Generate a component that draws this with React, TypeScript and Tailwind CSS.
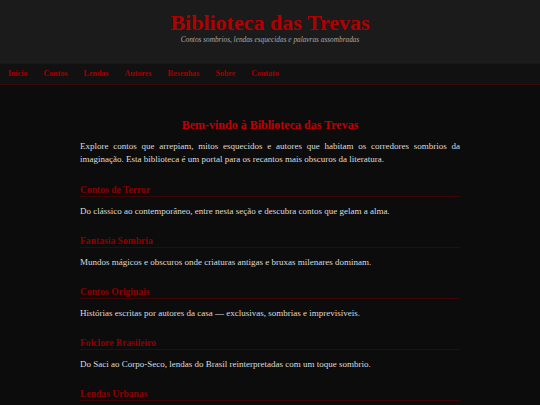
import React from 'react';

const links = ['Inicio', 'Contos', 'Lendas', 'Autores', 'Resenhas', 'Sobre', 'Contato'];

const sections = [
  { title: 'Contos de Terror', text: 'Do clássico ao contemporâneo, entre nesta seção e descubra contos que gelam a alma.' },
  { title: 'Fantasia Sombria', text: 'Mundos mágicos e obscuros onde criaturas antigas e bruxas milenares dominam.' },
  { title: 'Contos Originais', text: 'Histórias escritas por autores da casa — exclusivas, sombrias e imprevisíveis.' },
  { title: 'Folclore Brasileiro', text: 'Do Saci ao Corpo-Seco, lendas do Brasil reinterpretadas com um toque sombrio.' },
  { title: 'Lendas Urbanas', text: 'Histórias que circulam pelas cidades, sussurradas entre becos e madrugadas.' },
];

const App: React.FC = () => {
  return (
    <div className="min-h-screen bg-[#0c0c0c] text-[#dcdcdc]" style={{ fontFamily: '"Liberation Serif", serif' }}>
      <header className="bg-[#1b1b1c] border-b border-[#3a0a0a] pt-[11px] pb-[18px] text-center">
        <h1 className="text-[22px] leading-[24px] font-bold text-[#b00000]">Biblioteca das Trevas</h1>
        <p className="text-[7.3px] leading-[10px] italic text-[#a8a8a8]">Contos sombrios, lendas esquecidas e palavras assombradas</p>
      </header>
      <nav className="bg-[#111111] border-b border-[#3a0a0a] h-[21px] px-[8px] flex items-center gap-[16px]">
        {links.map((l) => (
          <span key={l} className="text-[8px] font-bold text-[#a00000]">{l}</span>
        ))}
      </nav>
      <main className="w-[380px] mx-auto pt-[32px]">
        <h2 className="text-center text-[12px] leading-[16px] font-bold text-[#c00000]">Bem-vindo à Biblioteca das Trevas</h2>
        <p className="mt-[6.5px] text-[9px] leading-[13px] text-justify">
          Explore contos que arrepiam, mitos esquecidos e autores que habitam os corredores sombrios da imaginação. Esta biblioteca é um portal para os recantos mais obscuros da literatura.
        </p>
        {sections.map((s, i) => (
          <section key={s.title} className={i === 0 ? 'mt-[18px]' : 'mt-[17px]'}>
            <h3 className="text-[9.6px] leading-[11px] font-bold text-[#8b0000] pb-[1px] border-b border-[#3d0505]">{s.title}</h3>
            <p className="mt-[8px] text-[9px] leading-[13px]">{s.text}</p>
          </section>
        ))}
      </main>
    </div>
  );
};

export default App;
